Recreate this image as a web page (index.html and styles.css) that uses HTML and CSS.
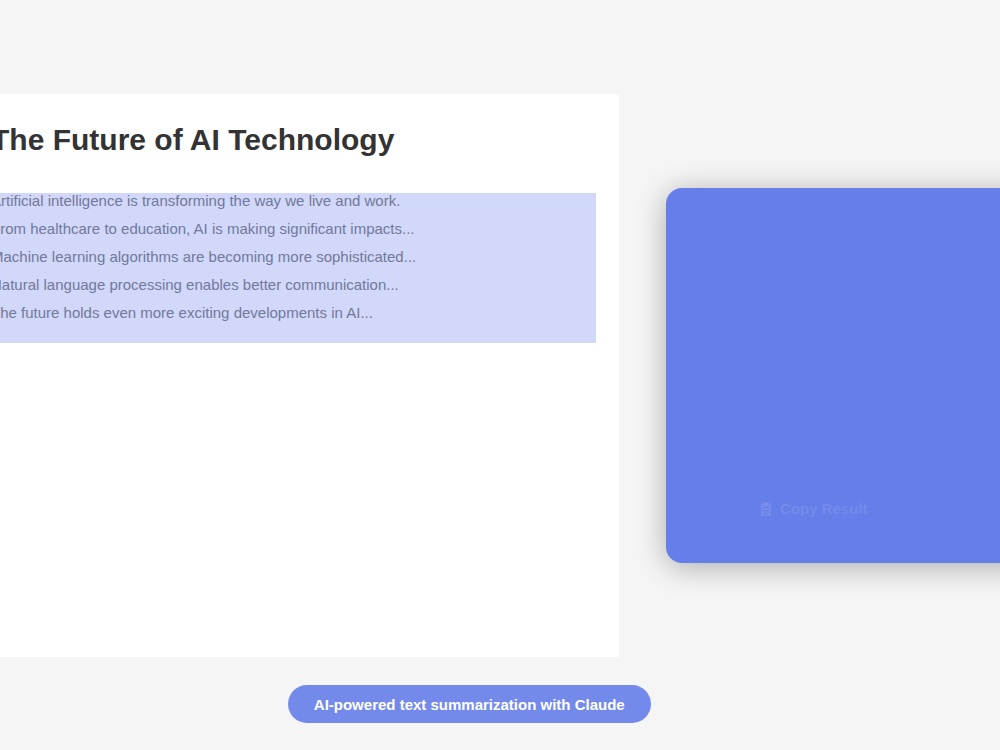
FILE: index.html
```html
<!DOCTYPE html>
<html lang="en">
<head>
<meta charset="utf-8">
<title>AI Text Summarization</title>
<link rel="stylesheet" href="styles.css">
</head>
<body>
<main class="stage">
  <section class="doc">
    <h1 class="doc-title">The Future of AI Technology</h1>
    <div class="doc-body">
      <p class="line">Artificial intelligence is transforming the way we live and work.</p>
      <p class="line">From healthcare to education, AI is making significant impacts...</p>
      <p class="line">Machine learning algorithms are becoming more sophisticated...</p>
      <p class="line">Natural language processing enables better communication...</p>
      <p class="line">The future holds even more exciting developments in AI...</p>
      <div class="selection"></div>
    </div>
  </section>
  <section class="result">
    <div class="copy">
      <svg class="copy-icon" viewBox="0 0 12 14" aria-hidden="true">
        <path fill-rule="evenodd" d="M1 1.5h10v12.500h-10z M3 5v1h6v-1z M3 8v1h6v-1z M3 11v1h6v-1z"></path>
        <path d="M3.500 0h5v2.500h-5z"></path>
      </svg>
      <span>Copy Result</span>
    </div>
  </section>
</main>
<footer class="caption-row">
  <div class="caption">AI-powered text summarization with Claude</div>
</footer>
</body>
</html>
```

FILE: styles.css
```css
* { box-sizing: border-box; }
html, body { margin: 0; height: 100%; }
body {
  width: 1000px;
  height: 750px;
  overflow: hidden;
  background: #f5f5f5;
  font-family: "Liberation Sans", Arial, sans-serif;
  padding-top: 94px;
}
.stage {
  display: flex;
  align-items: center;
  gap: 47px;
  margin-left: -39px;
  width: 1300px;
}
.doc {
  flex: none;
  width: 658px;
  height: 563px;
  background: #fff;
  padding: 24px 23px 0 30px;
}
.doc-title {
  margin: 0 0 25px;
  font-size: 30px;
  line-height: 44px;
  font-weight: 700;
  color: #333;
}
.doc-body { position: relative; }
.line {
  margin: 0;
  font-size: 15px;
  line-height: 28px;
  color: #777;
}
.selection {
  position: absolute;
  left: -30px;
  right: 0;
  top: 6px;
  height: 150px;
  background: rgba(102, 126, 234, 0.3);
}
.result {
  flex: none;
  width: 500px;
  height: 375px;
  background: #667eea;
  border-radius: 16px;
  box-shadow: 0 4px 30px rgba(0, 0, 0, 0.3);
  display: flex;
  flex-direction: column;
  justify-content: flex-end;
  padding: 0 0 44px 94px;
}
.copy {
  display: flex;
  align-items: center;
  gap: 8px;
  font-size: 15px;
  line-height: 20px;
  font-weight: 700;
  color: rgba(255, 255, 255, 0.1);
}
.copy-icon { width: 12px; height: 14px; fill: rgba(255, 255, 255, 0.1); }
.caption-row {
  padding: 28px 0 0 288px;
}
.caption {
  width: 362.500px;
  height: 38px;
  border-radius: 19px;
  background: rgba(102, 126, 234, 0.9);
  color: #fff;
  font-size: 15px;
  font-weight: 700;
  line-height: 40px;
  text-align: center;
}
```
